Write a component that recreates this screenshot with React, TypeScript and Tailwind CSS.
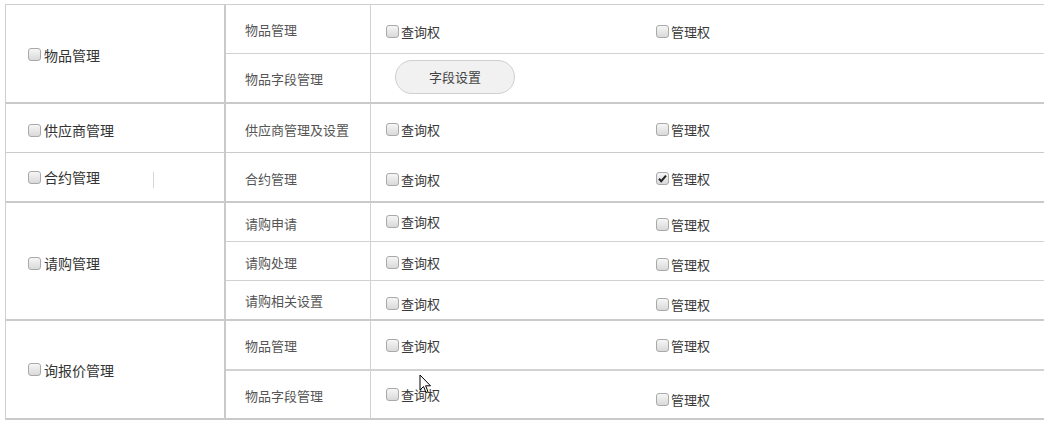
import React from "react"

type Sub = {
  name: string
  h: string
  nameOff?: string
  q?: string
  m?: string
  button?: boolean
  checkedM?: boolean
  line?: string
}

type Group = {
  label: string
  labelOff?: string
  border: string
  rows: Sub[]
  caret?: boolean
}

const groups: Group[] = [
  {
    label: "物品管理",
    labelOff: "translate-y-[1px]",
    border: "border-b-2",
    rows: [
      { name: "物品管理", h: "h-[49px]", q: "translate-y-[2px]", m: "translate-y-[2px]", line: "border-b" },
      { name: "物品字段管理", h: "h-[48px]", button: true },
    ],
  },
  {
    label: "供应商管理",
    labelOff: "translate-y-[2px]",
    border: "border-b",
    rows: [
      { name: "供应商管理及设置", h: "h-[48px]", nameOff: "translate-y-[1px]", q: "translate-y-[1px]", m: "translate-y-[1px]" },
    ],
  },
  {
    label: "合约管理",
    border: "border-b-2",
    caret: true,
    rows: [
      { name: "合约管理", h: "h-[48px]", nameOff: "translate-y-[1px]", q: "translate-y-[2px]", m: "translate-y-[1px]", checkedM: true },
    ],
  },
  {
    label: "请购管理",
    labelOff: "translate-y-[2px]",
    border: "border-b-2",
    rows: [
      { name: "请购申请", h: "h-[39px]", nameOff: "translate-y-[1px]", q: "-translate-y-[1px]", m: "translate-y-[2px]", line: "border-b" },
      { name: "请购处理", h: "h-[39px]", nameOff: "translate-y-[1px]", q: "translate-y-[1px]", m: "translate-y-[3px]", line: "border-b" },
      { name: "请购相关设置", h: "h-[38px]", q: "translate-y-[3px]", m: "translate-y-[4px]" },
    ],
  },
  {
    label: "询报价管理",
    border: "border-b-2",
    rows: [
      { name: "物品管理", h: "h-[50px]", q: "", m: "", line: "border-b-2" },
      { name: "物品字段管理", h: "h-[47px]", nameOff: "translate-y-[1px]", q: "", m: "translate-y-[5px]" },
    ],
  },
]

function Box({ checked }: { checked?: boolean }) {
  return (
    <span className="relative inline-block w-[13px] h-[13px] shrink-0 rounded-[3px] border border-[#a9a9a9] bg-gradient-to-b from-[#f6f6f6] to-[#d9d9d9]">
      {checked && (
        <svg viewBox="0 0 13 13" className="absolute -left-px -top-px w-[13px] h-[13px]">
          <path d="M3 6.8 L5.2 9.2 L10 3.6" fill="none" stroke="#222" strokeWidth="2" />
        </svg>
      )}
    </span>
  )
}

function Perm({ label, checked, off }: { label: string; checked?: boolean; off?: string }) {
  return (
    <label className={`flex items-center gap-[2px] text-[13px] leading-[17px] text-[#3a3a3a] ${off ?? ""}`}>
      <Box checked={checked} />
      <span>{label}</span>
    </label>
  )
}

export default function App() {
  return (
    <div className="relative w-[1044px] h-[424px] overflow-hidden bg-white font-['Noto_Sans_CJK_SC','Liberation_Sans',sans-serif]">
      <div className="ml-[5px] mt-[4px] border-l border-t border-[#cfcfcf]">
        {groups.map((g) => (
          <div key={g.label} className={`flex ${g.border} border-[#cacaca]`}>
            <div className="w-[220px] shrink-0 border-r-2 border-[#cacaca] flex items-center pl-[22px]">
              <div className={`flex items-center gap-[3px] text-[14px] leading-[18px] text-[#333] ${g.labelOff ?? ""}`}>
                <Box />
                <span>{g.label}</span>
                {g.caret && <span className="ml-[50px] w-px h-[16px] bg-[#d6d6d6] translate-y-[3px]" />}
              </div>
            </div>
            <div className="flex-1 flex flex-col">
              {g.rows.map((r, i) => (
                <div key={i} className={`flex ${r.h} ${r.line ?? ""} border-[#d2d2d2]`}>
                  <div className="w-[145px] shrink-0 border-r border-[#d2d2d2] flex items-center pl-[19px]">
                    <span className={`text-[13px] leading-[17px] text-[#555] ${r.nameOff ?? ""}`}>{r.name}</span>
                  </div>
                  <div className="flex-1 flex items-center pl-[15px]">
                    {r.button ? (
                      <button className="ml-[9px] -translate-y-[1px] w-[120px] h-[34px] rounded-[17px] border border-[#cfcfcf] bg-[#f1f1f1] text-[13px] text-[#444]">
                        字段设置
                      </button>
                    ) : (
                      <>
                        <div className="w-[270px]">
                          <Perm label="查询权" off={r.q} />
                        </div>
                        <Perm label="管理权" off={r.m} checked={r.checkedM} />
                      </>
                    )}
                  </div>
                </div>
              ))}
            </div>
          </div>
        ))}
      </div>
      {/* mouse pointer */}
      <svg viewBox="0 0 13 21" className="absolute left-[419px] top-[374px] w-[13px] h-[21px]">
        <path
          d="M1 1 L1 16 L4.5 12.5 L7 18.5 L9 17.6 L6.6 11.8 L11.5 11.8 Z"
          fill="#fff"
          stroke="#000"
          strokeWidth="1"
          strokeLinejoin="miter"
        />
      </svg>
    </div>
  )
}
